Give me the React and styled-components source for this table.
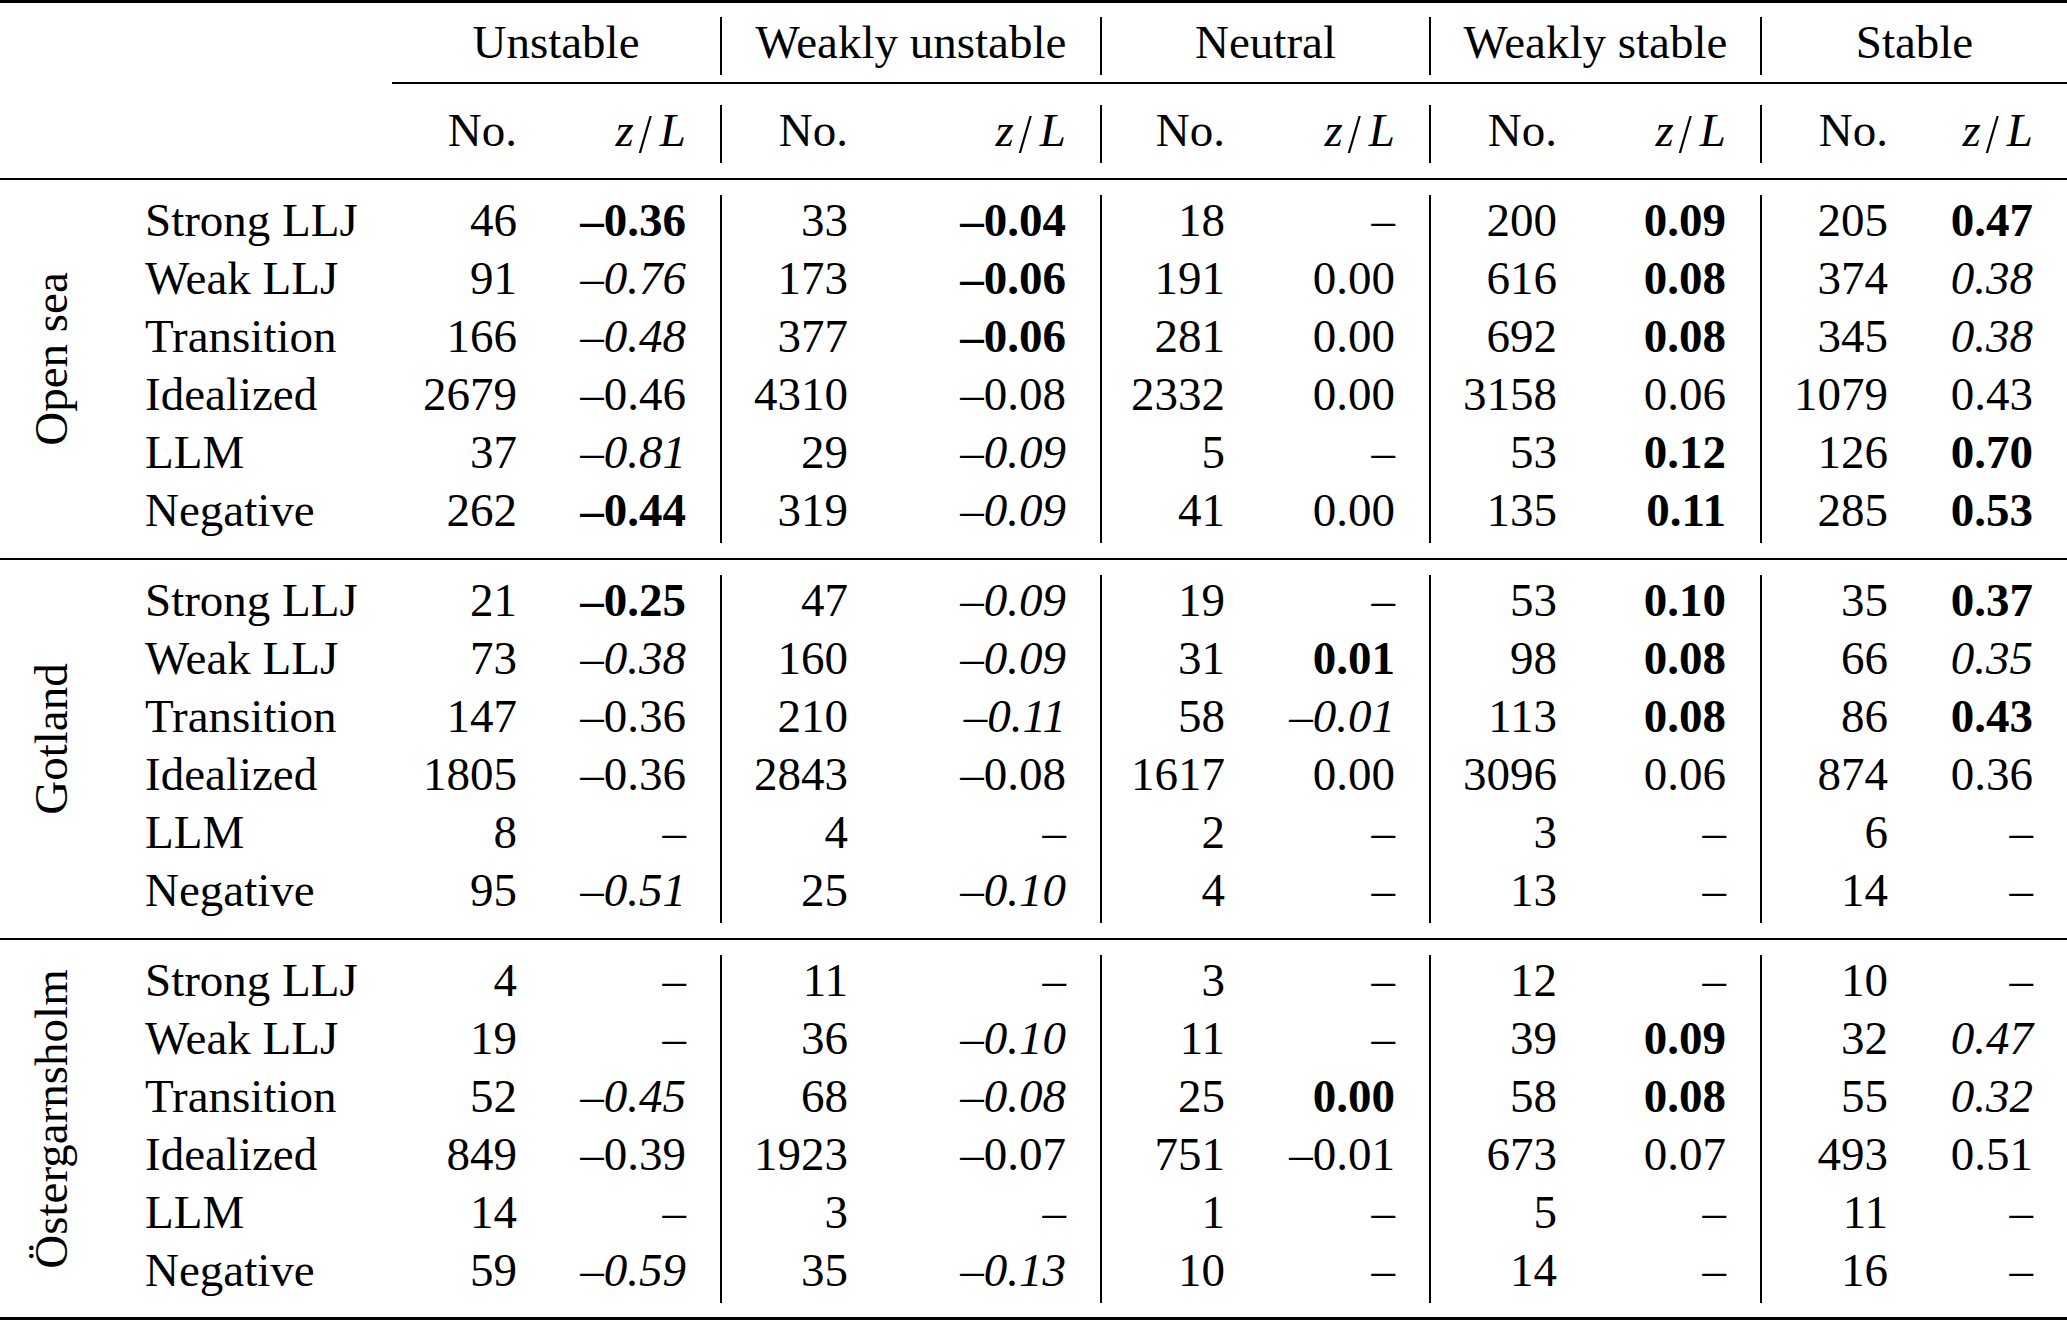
import styled, { createGlobalStyle } from "styled-components";

// largeur des colonnes : étiquette, nom de classe, puis No. / z/L pour chaque stabilité
const COLS =
  "102px 290px 159px 171px 160px 220px 157px 172px 160px 171px 160px 145px";

const GlobalStyle = createGlobalStyle`
  html, body {
    margin: 0;
    padding: 0;
    background: #fff;
  }
  body {
    font-family: "Liberation Serif", "Times New Roman", serif;
    color: #000;
  }
`;

const Page = styled.div`
  width: 2067px;
  display: flex;
  flex-direction: column;
  font-size: 47px;
`;

const Rule = styled.div`
  height: ${(p) => p.$h}px;
  background: #000;
  margin-top: ${(p) => p.$mt || 0}px;
  margin-bottom: ${(p) => p.$mb || 0}px;
  margin-left: ${(p) => p.$ml || 0}px;
`;

const Row = styled.div`
  display: grid;
  grid-template-columns: ${COLS};
  grid-auto-rows: 58px;
`;

const Cell = styled.div`
  box-sizing: border-box;
  height: 58px;
  line-height: 50px;
  padding-bottom: 8px;
  padding-right: 34px;
  text-align: right;
  white-space: nowrap;
  font-weight: ${(p) => (p.$tone === "b" ? 700 : 400)};
  font-style: ${(p) => (p.$tone === "i" ? "italic" : "normal")};
  border-right: ${(p) => (p.$bar ? "2px solid #000" : "none")};
`;

const Blank = styled.div`
  grid-column: span 2;
`;

const GroupHead = styled(Cell)`
  grid-column: span 2;
  text-align: center;
  padding-right: 0;
`;

const Name = styled(Cell)`
  text-align: left;
  padding-right: 0;
  padding-left: 43px;
`;

const Math = styled.span`
  font-style: italic;
`;

const Slash = styled.span`
  display: inline-block;
  font-style: normal;
  margin: 0 8px 0 5px;
  transform: scaleY(1.15) translateY(3px);
`;

const Group = styled.div`
  display: grid;
  grid-template-columns: ${COLS};
  grid-auto-rows: 58px;
`;

const LabelCell = styled.div`
  grid-column: 1;
  grid-row: 1 / span 6;
  display: flex;
  align-items: center;
  justify-content: center;
  overflow: visible;
`;

const Label = styled.span`
  flex-shrink: 0;
  white-space: nowrap;
  line-height: 52px;
  transform: translateY(-10px) rotate(-90deg);
`;

const B = (v) => ({ v, t: "b" });
const I = (v) => ({ v, t: "i" });

const stabilities = [
  "Unstable",
  "Weakly unstable",
  "Neutral",
  "Weakly stable",
  "Stable",
];

const groups = [
  {
    name: "Open sea",
    rows: [
      ["Strong LLJ", "46", B("–0.36"), "33", B("–0.04"), "18", "–", "200", B("0.09"), "205", B("0.47")],
      ["Weak LLJ", "91", I("–0.76"), "173", B("–0.06"), "191", "0.00", "616", B("0.08"), "374", I("0.38")],
      ["Transition", "166", I("–0.48"), "377", B("–0.06"), "281", "0.00", "692", B("0.08"), "345", I("0.38")],
      ["Idealized", "2679", "–0.46", "4310", "–0.08", "2332", "0.00", "3158", "0.06", "1079", "0.43"],
      ["LLM", "37", I("–0.81"), "29", I("–0.09"), "5", "–", "53", B("0.12"), "126", B("0.70")],
      ["Negative", "262", B("–0.44"), "319", I("–0.09"), "41", "0.00", "135", B("0.11"), "285", B("0.53")],
    ],
  },
  {
    name: "Gotland",
    rows: [
      ["Strong LLJ", "21", B("–0.25"), "47", I("–0.09"), "19", "–", "53", B("0.10"), "35", B("0.37")],
      ["Weak LLJ", "73", I("–0.38"), "160", I("–0.09"), "31", B("0.01"), "98", B("0.08"), "66", I("0.35")],
      ["Transition", "147", "–0.36", "210", I("–0.11"), "58", I("–0.01"), "113", B("0.08"), "86", B("0.43")],
      ["Idealized", "1805", "–0.36", "2843", "–0.08", "1617", "0.00", "3096", "0.06", "874", "0.36"],
      ["LLM", "8", "–", "4", "–", "2", "–", "3", "–", "6", "–"],
      ["Negative", "95", I("–0.51"), "25", I("–0.10"), "4", "–", "13", "–", "14", "–"],
    ],
  },
  {
    name: "Östergarnsholm",
    rows: [
      ["Strong LLJ", "4", "–", "11", "–", "3", "–", "12", "–", "10", "–"],
      ["Weak LLJ", "19", "–", "36", I("–0.10"), "11", "–", "39", B("0.09"), "32", I("0.47")],
      ["Transition", "52", I("–0.45"), "68", I("–0.08"), "25", B("0.00"), "58", B("0.08"), "55", I("0.32")],
      ["Idealized", "849", "–0.39", "1923", "–0.07", "751", "–0.01", "673", "0.07", "493", "0.51"],
      ["LLM", "14", "–", "3", "–", "1", "–", "5", "–", "11", "–"],
      ["Negative", "59", I("–0.59"), "35", I("–0.13"), "10", "–", "14", "–", "16", "–"],
    ],
  },
];

function ZL() {
  return (
    <Math>
      z<Slash>/</Slash>L
    </Math>
  );
}

function DataCells({ values }) {
  return values.map((val, j) => {
    const cell = typeof val === "string" ? { v: val } : val;
    const bar = j % 2 === 1 && j < 9;
    return (
      <Cell key={j} $tone={cell.t} $bar={bar}>
        {cell.v}
      </Cell>
    );
  });
}

export default function App() {
  return (
    <>
      <GlobalStyle />
      <Page>
        <Rule $h={3} $mb={14} />

        <Row>
          <Blank />
          {stabilities.map((s, i) => (
            <GroupHead key={s} $bar={i < 4}>
              {s}
            </GroupHead>
          ))}
        </Row>

        <Rule $h={2} $mt={7} $mb={21} $ml={392} />

        <Row>
          <Blank />
          {stabilities.map((s, i) => [
            <Cell key={s + "n"}>No.</Cell>,
            <Cell key={s + "z"} $bar={i < 4}>
              <ZL />
            </Cell>,
          ])}
        </Row>

        <Rule $h={2} $mt={15} $mb={15} />

        {groups.map((g, gi) => (
          <div key={g.name}>
            <Group>
              <LabelCell>
                <Label>{g.name}</Label>
              </LabelCell>
              {g.rows.map((r) => [
                <Name key={r[0]}>{r[0]}</Name>,
                <DataCells key={r[0] + "d"} values={r.slice(1)} />,
              ])}
            </Group>
            {gi < groups.length - 1 ? (
              <Rule $h={2} $mt={15} $mb={15} />
            ) : (
              <Rule $h={3} $mt={14} />
            )}
          </div>
        ))}
      </Page>
    </>
  );
}
